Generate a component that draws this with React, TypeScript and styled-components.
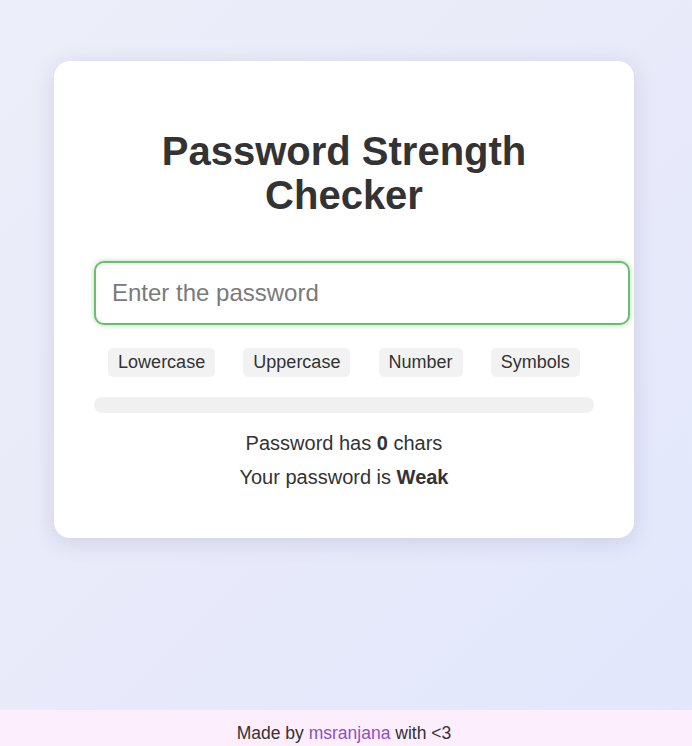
import React, { useState } from "react";
import styled, { createGlobalStyle } from "styled-components";

const Global = createGlobalStyle`
  * { box-sizing: content-box; }
  html, body { margin: 0; padding: 0; }
  body {
    font-family: "Liberation Sans", Arial, sans-serif;
    color: #333;
    background: linear-gradient(135deg, #eceef9 0%, #e8eafa 50%, #e2e7fc 100%);
    min-height: 100vh;
  }
`;

const Page = styled.div`
  min-height: 100vh;
  display: flex;
  flex-direction: column;
`;

const Main = styled.main`
  flex: 1;
  display: flex;
  justify-content: center;
  align-items: flex-start;
  padding: 61px 4px 40px 0;
`;

const Card = styled.section`
  width: 500px;
  padding: 40px 40px 40px;
  background: #ffffff;
  border-radius: 16px;
  box-shadow: 0 4px 22px rgba(40, 40, 80, 0.13);
  display: flex;
  flex-direction: column;
`;

const Title = styled.h1`
  margin: 28px 0 44px;
  font-size: 40px;
  line-height: 44px;
  font-weight: 700;
  text-align: center;
  color: #333;
`;

const Input = styled.input`
  display: block;
  width: 100%;
  padding: 16px;
  font-family: "Liberation Sans", Arial, sans-serif;
  font-size: 24px;
  color: #333;
  border: 2px solid #6abf69;
  border-radius: 10px;
  box-shadow: 0 0 5px rgba(76, 175, 80, 0.45);
  outline: none;
  background: #fff;
  &::placeholder { color: #7a7a7a; }
`;

const Chips = styled.div`
  display: flex;
  justify-content: space-around;
  margin-top: 23px;
`;

const Chip = styled.span<{ $on?: boolean }>`
  padding: 4px 10px;
  font-size: 18px;
  border-radius: 5px;
  background: ${(p) => (p.$on ? "#d4edda" : "#f2f2f2")};
  color: #333;
`;

const Bar = styled.div`
  margin-top: 20px;
  height: 16px;
  border-radius: 8px;
  background: #f0f0f0;
  overflow: hidden;
`;

const Fill = styled.div`
  height: 100%;
  background: #e74c3c;
`;

const Info = styled.div`
  margin: 19px 0 9px;
  display: flex;
  flex-direction: column;
  gap: 11px;
  text-align: center;
`;

const Line = styled.p`
  margin: 0;
  font-size: 20px;
  line-height: 23px;
  color: #333;
`;

const Footer = styled.footer`
  background: #fdeefd;
  padding: 10px 4px 0 0;
  text-align: center;
  font-size: 17.5px;
  line-height: 26px;
  color: #333;
`;

const Link = styled.a`
  color: #8e4fc4;
  text-decoration: none;
`;

export default function App() {
  const [value, setValue] = useState("");
  const checks = [
    { label: "Lowercase", ok: /[a-z]/.test(value) },
    { label: "Uppercase", ok: /[A-Z]/.test(value) },
    { label: "Number", ok: /[0-9]/.test(value) },
    { label: "Symbols", ok: /[^A-Za-z0-9]/.test(value) },
  ];
  const score = checks.filter((c) => c.ok).length + (value.length >= 8 ? 1 : 0);
  const strength = score >= 5 ? "Strong" : score >= 3 ? "Medium" : "Weak";
  return (
    <Page>
      <Global />
      <Main>
        <Card>
          <Title>Password Strength Checker</Title>
          <Input
            type="text"
            placeholder="Enter the password"
            value={value}
            onChange={(e) => setValue(e.target.value)}
            autoFocus
          />
          <Chips>
            {checks.map((c) => (
              <Chip key={c.label} $on={c.ok}>
                {c.label}
              </Chip>
            ))}
          </Chips>
          <Bar>
            <Fill style={{ width: `${(score / 5) * 100}%` }} />
          </Bar>
          <Info>
            <Line>
              Password has <b>{value.length}</b> chars
            </Line>
            <Line>
              Your password is <b>{strength}</b>
            </Line>
          </Info>
        </Card>
      </Main>
      <Footer>
        Made by <Link href="#">msranjana</Link> with &lt;3
      </Footer>
    </Page>
  );
}
